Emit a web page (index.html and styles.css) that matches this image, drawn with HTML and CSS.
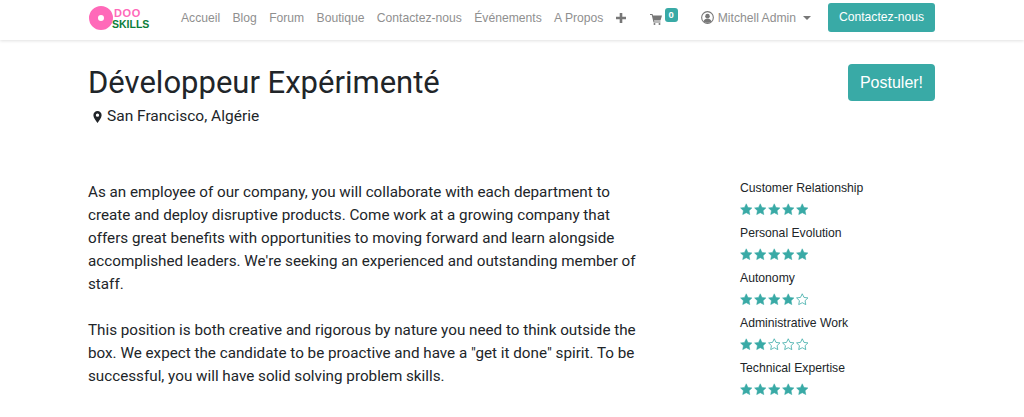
FILE: index.html
```html
<!DOCTYPE html>
<html lang="fr">
<head>
<meta charset="utf-8">
<title>Développeur Expérimenté</title>
<link rel="stylesheet" href="styles.css">
</head>
<body>
<svg class="defs" width="0" height="0" aria-hidden="true">
  <symbol id="star" viewBox="0 0 24 24"><path d="M12 1.5l3.3 6.9 7.6 1-5.5 5.3 1.4 7.6L12 18.6l-6.8 3.7 1.4-7.6L1.1 9.4l7.6-1z"/></symbol>
</svg>
<header class="topbar">
  <div class="logo">
    <svg class="logo-mark" viewBox="0 0 24 24" width="24" height="24"><circle cx="12" cy="12" r="7.500" fill="none" stroke="#ff69b9" stroke-width="9"/></svg>
    <div class="logo-text"><span class="logo-doo">DOO</span><span class="logo-skills">SKILLS</span></div>
  </div>
  <nav class="menu">
    <a>Accueil</a><a>Blog</a><a>Forum</a><a>Boutique</a><a>Contactez-nous</a><a>Événements</a><a>A Propos</a>
    <svg class="plus" viewBox="0 0 10 10" width="10" height="10"><path d="M3.700 0h2.600v3.700H10v2.600H6.300V10H3.700V6.300H0V3.700h3.700z"/></svg>
  </nav>
  <div class="cart">
    <svg viewBox="0 0 24 22" width="12" height="11"><path d="M0 0h5l1 3h18l-3 10H8l.5 2H21v2H7L3.500 2H0z"/><circle cx="9" cy="20" r="2"/><circle cx="19" cy="20" r="2"/></svg>
    <span class="badge">0</span>
  </div>
  <div class="user">
    <svg viewBox="0 0 24 24" width="13" height="13"><circle cx="12" cy="12" r="10.800" fill="none" stroke="#777" stroke-width="2"/><circle cx="12" cy="9.500" r="4.200" fill="#777"/><path d="M4.800 19c1.200-3.500 4-4.500 7.200-4.500s6 1 7.200 4.500c-4 3.800-10.400 3.800-14.400 0z" fill="#777"/></svg>
    <span>Mitchell Admin</span>
    <span class="caret"></span>
  </div>
  <a class="btn btn-top">Contactez-nous</a>
</header>
<main class="page">
  <section class="title-row">
    <div>
      <h1>Développeur Expérimenté</h1>
      <p class="location">
        <svg viewBox="0 0 12 16" width="9" height="12"><path fill-rule="evenodd" d="M6 0a5.500 5.500 0 0 1 5.500 5.500C11.500 9 8 12.500 6 16 4 12.500.5 9 .5 5.500A5.500 5.500 0 0 1 6 0zm0 3.300a2.200 2.200 0 1 0 0 4.400 2.200 2.200 0 0 0 0-4.400z"/></svg>
        <span>San Francisco, Algérie</span>
      </p>
    </div>
    <a class="btn btn-apply">Postuler!</a>
  </section>
  <section class="content">
    <div class="description">
      <p>As an employee of our company, you will collaborate with each department to create and deploy disruptive products. Come work at a growing company that offers great benefits with opportunities to moving forward and learn alongside accomplished leaders. We're seeking an experienced and outstanding member of staff.</p>
      <p>This position is both creative and rigorous by nature you need to think outside the box. We expect the candidate to be proactive and have a "get it done" spirit. To be successful, you will have solid solving problem skills.</p>
    </div>
    <aside class="skills">
      <div class="skill"><div class="skill-name">Customer Relationship</div>
        <div class="stars"><svg><use href="#star"/></svg><svg><use href="#star"/></svg><svg><use href="#star"/></svg><svg><use href="#star"/></svg><svg><use href="#star"/></svg></div></div>
      <div class="skill"><div class="skill-name">Personal Evolution</div>
        <div class="stars"><svg><use href="#star"/></svg><svg><use href="#star"/></svg><svg><use href="#star"/></svg><svg><use href="#star"/></svg><svg><use href="#star"/></svg></div></div>
      <div class="skill"><div class="skill-name">Autonomy</div>
        <div class="stars"><svg><use href="#star"/></svg><svg><use href="#star"/></svg><svg><use href="#star"/></svg><svg><use href="#star"/></svg><svg class="off"><use href="#star"/></svg></div></div>
      <div class="skill"><div class="skill-name">Administrative Work</div>
        <div class="stars"><svg><use href="#star"/></svg><svg><use href="#star"/></svg><svg class="off"><use href="#star"/></svg><svg class="off"><use href="#star"/></svg><svg class="off"><use href="#star"/></svg></div></div>
      <div class="skill"><div class="skill-name">Technical Expertise</div>
        <div class="stars"><svg><use href="#star"/></svg><svg><use href="#star"/></svg><svg><use href="#star"/></svg><svg><use href="#star"/></svg><svg><use href="#star"/></svg></div></div>
    </aside>
  </section>
</main>
</body>
</html>
```
FILE: styles.css
```css
* { box-sizing: border-box; }
html, body { margin: 0; height: 417px; overflow: hidden; background: #fff; }
body { font-family: Roboto, "Liberation Sans", sans-serif; color: #212529; }
.defs { display: block; height: 0; }
.topbar {
  height: 40px;
  padding: 0 89px 5px;
  display: flex;
  align-items: center;
  box-shadow: 0 1px 3px rgba(0,0,0,.12);
  font-family: "Liberation Sans", sans-serif;
  font-size: 12.150px;
  color: #8f8f8f;
}
.logo { display: flex; align-items: center; width: 92px; flex: none; }
.logo-mark { flex: none; }
.logo-text { display: flex; flex-direction: column; font-weight: 700; line-height: 11px; margin: 3px 0 0 -1px; }
.logo-doo { color: #ff69b9; font-size: 11px; letter-spacing: .6px; padding-left: 2px; }
.logo-skills { color: #0b7d3a; font-size: 10.500px; }
.menu { display: flex; align-items: center; gap: 12.350px; white-space: nowrap; }
.plus { fill: #777; margin-top: 1px; }
.cart { display: flex; align-items: flex-start; margin-left: 24px; fill: #777; }
.cart svg { margin-top: 3px; }
.badge {
  background: #39aaa6; color: #fff; font-size: 9.500px; font-weight: 700;
  width: 13px; height: 14px; line-height: 13px; text-align: center;
  border-radius: 3px; margin: -3px 0 0 3px;
}
.user { display: flex; align-items: center; margin-left: 23px; gap: 4px; white-space: nowrap; }
.caret { width: 0; height: 0; border: 4px solid transparent; border-top-color: #777; border-bottom: 0; margin-left: 3px; }
.btn { display: block; background: #39aaa6; color: #fff; border-radius: 3px; text-align: center; font-family: "Liberation Sans", sans-serif; }
.btn-top { margin-left: auto; width: 107px; height: 29px; line-height: 29px; }
.page { padding: 0 89px 0 88px; }
.title-row { display: flex; justify-content: space-between; align-items: flex-start; padding-top: 25px; }
h1 { margin: 0; font-weight: 400; font-size: 31px; line-height: 36px; }
.location { margin: 5px 0 0 5px; display: flex; align-items: center; gap: 5px; font-size: 15.500px; line-height: 21px; }
.location svg { fill: #212529; }
.btn-apply { width: 87px; height: 37px; line-height: 37px; margin-top: -1px; font-size: 16px; border-radius: 4px; }
.content { display: flex; margin-top: 54px; }
.description { width: 552px; font-size: 15.230px; line-height: 23px; }
.description p { margin: 0 0 23px; }
.skills { margin-left: 100px; font-family: "Liberation Sans", sans-serif; font-size: 12.200px; margin-top: -4px; }
.skill { height: 45px; padding-top: 3px; }
.skill-name { line-height: 16px; }
.stars { display: flex; gap: 1.500px; margin-top: 7px; }
.stars svg { width: 12.500px; height: 12.500px; fill: #39aaa6; stroke: #39aaa6; stroke-width: 1; }
.stars svg.off { fill: none; stroke-width: 1.500; }
```
